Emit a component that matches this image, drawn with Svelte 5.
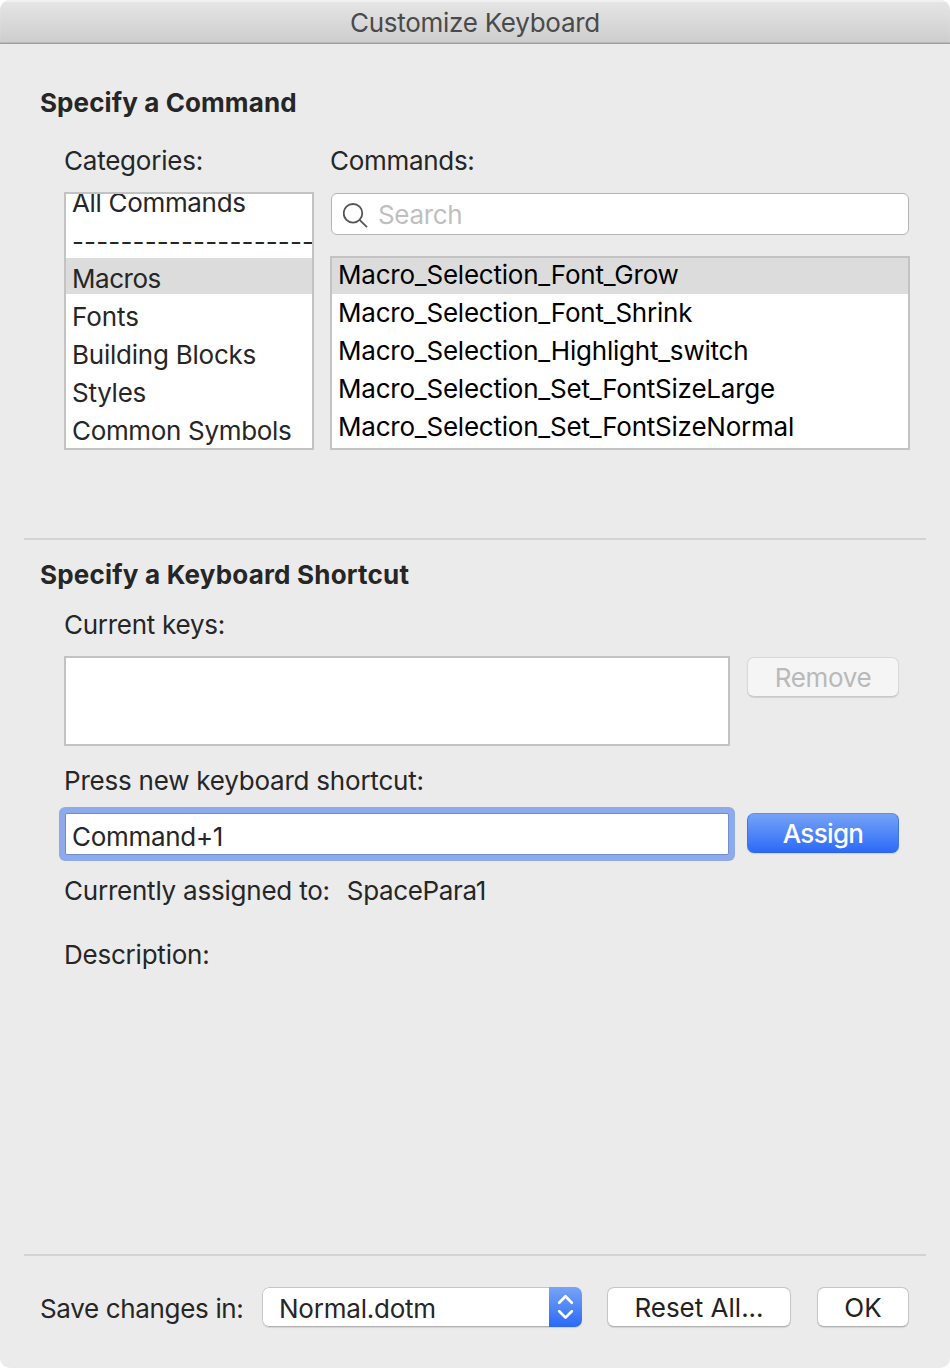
<script>
  const categories = [
    ['All Commands', -0.33],
    ['--------------------', 0.15],
    ['Macros', -0.48],
    ['Fonts', -0.05],
    ['Building Blocks', -0.23],
    ['Styles', -0.27],
    ['Common Symbols', -0.33]
  ];
  const commands = [
    'Macro_Selection_Font_Grow',
    'Macro_Selection_Font_Shrink',
    'Macro_Selection_Highlight_switch',
    'Macro_Selection_Set_FontSizeLarge',
    'Macro_Selection_Set_FontSizeNormal'
  ];
</script>

<div class="win">
  <header><span>Customize Keyboard</span></header>
  <section class="top">
    <h2>Specify a Command</h2>
    <div class="cols">
      <div class="left">
        <div class="label">Categories:</div>
        <div class="list cats">
          {#each categories as [name, tracking], i}
            <div class="item" class:sel={i === 2} class:dash={i === 1} style="letter-spacing: {tracking}px">{name}</div>
          {/each}
        </div>
      </div>
      <div class="right">
        <div class="label">Commands:</div>
        <div class="search">
          <svg width="26" height="28" viewBox="0 0 26 28"><circle cx="10" cy="13.300" r="9.300" /><path d="M16.600 19.900L24 27.200" /></svg>
          <span>Search</span>
        </div>
        <div class="list cmds">
          {#each commands as name, i}
            <div class="item" class:sel={i === 0}>{name}</div>
          {/each}
        </div>
      </div>
    </div>
  </section>
  <section class="mid">
    <h2 class="wide">Specify a Keyboard Shortcut</h2>
    <div class="label cur">Current keys:</div>
    <div class="row"><div class="keys"></div><button class="btn off">Remove</button></div>
    <div class="label press">Press new keyboard shortcut:</div>
    <div class="row r2"><div class="field">Command+1</div><button class="btn blue">Assign</button></div>
    <div class="label assigned"><span>Currently assigned to:</span><span class="name">SpacePara1</span></div>
    <div class="label desc">Description:</div>
  </section>
  <footer>
    <span class="save">Save changes in:</span>
    <div class="select">
      <span>Normal.dotm</span>
      <div class="arrows"><svg width="33" height="40" viewBox="0 0 33 40"><path d="M10.200 15.700L16.500 9.300L22.800 15.700M10.200 24.200L16.500 30.600L22.800 24.200" /></svg></div>
    </div>
    <button class="btn reset">Reset All...</button>
    <button class="btn ok">OK</button>
  </footer>
</div>

<style>
  :global(body) { background: #fff; }
  * { box-sizing: border-box; }
  .win { width: 950px; height: 1368px; background: #ebebeb; border-radius: 10px; overflow: hidden; font: 26px/38px Inter, sans-serif; color: #262626; display: flex; flex-direction: column; letter-spacing: -0.22px; white-space: nowrap; }
  header { height: 44px; flex: none; background: linear-gradient(#e6e6e6, #cdcdcd); border-bottom: 1px solid #9f9f9f; box-shadow: inset 0 -1px #b9b9b9, inset 0 2px 1px #f2f2f2; text-align: center; line-height: 45px; color: #4a4a4a; letter-spacing: -0.28px; }
  h2 { margin: 0; font-size: 26px; line-height: 38px; font-weight: 700; letter-spacing: 0.1px; }
  .wide { letter-spacing: 0.2px; }
  .top { height: 494px; margin: 0 24px; padding: 40px 16px 0; flex: none; }
  .cols { display: flex; gap: 16px; padding-left: 24px; padding-top: 20px; }
  .left { width: 250px; }
  .right { width: 580px; }
  .right .label { letter-spacing: -0.3px; }
  .list { background: #fff; border: 2px solid #c3c3c3; overflow: hidden; }
  .cats { height: 258px; margin-top: 12px; display: flex; flex-direction: column; justify-content: flex-end; }
  .item { height: 38px; flex: none; padding-left: 6px; line-height: 38px; }
  .cats .item { line-height: 42px; }
  .cats .dash { line-height: 44px; }
  .sel { background: #dcdcdc; }
  .cats .sel { background: linear-gradient(#dcdcdc 36px, #fff 36px); }
  .search { height: 42px; width: 578px; margin: 13px 1px 0; border: 1px solid #b5b5b5; border-radius: 6px; background: #fff; display: flex; align-items: center; padding-left: 11px; gap: 9px; color: #bfbfbf; letter-spacing: -0.35px; }
  .search span { padding-top: 2px; }
  .search svg { fill: none; stroke: #555; stroke-width: 1.8; }
  .cmds { height: 194px; margin-top: 21px; color: #000; }
  .cmds .item:first-child { height: 36px; line-height: 34px; }
  .mid { margin: 0 24px; height: 718px; border-top: 2px solid #d3d3d3; border-bottom: 2px solid #d3d3d3; padding: 16px 16px 0; flex: none; }
  .cur { padding: 12px 0 0 24px; letter-spacing: -0.27px; }
  .row { display: flex; padding-left: 24px; gap: 17px; margin-top: 12px; }
  .keys { width: 666px; height: 90px; background: #fff; border: 2px solid #c3c3c3; }
  .btn { font: inherit; letter-spacing: 0; color: #222; height: 40px; line-height: 36px; padding: 2px 0 0; border: 1px solid #c6c6c6; border-bottom-color: #b3b3b3; border-radius: 7px; background: #fff; box-shadow: 0 1px 1px #0000001c; }
  .off, .blue { width: 152px; letter-spacing: -0.33px; }
  .off { margin-top: 1px; color: #b9b9b9; background: #f5f5f5; border-color: #d8d8d8 #d8d8d8 #c9c9c9; }
  .blue { color: #fff; font-weight: 500; letter-spacing: -0.65px; background: linear-gradient(#78a4f6, #2a69f7) border-box; border-color: #5b8ff2 #3e76ea #2f67e8; }
  .press { padding-left: 24px; margin-top: 16px; }
  .r2 { margin-top: 13px; }
  .field { width: 664px; height: 42px; margin: 0 1px; background: #fff; border: 1px solid #6f8dd2; border-radius: 1px; box-shadow: 0 0 0 5px #8eaaea, 0 0 0 6px #8eaaea; padding-left: 6px; line-height: 46px; letter-spacing: -0.3px; outline: 6px solid #8eaaea; }
  .assigned { padding-left: 24px; margin-top: 17px; display: flex; gap: 17px; }
  .name { letter-spacing: -0.35px; }
  .desc { padding-left: 24px; margin-top: 26px; }
  footer { flex: 1; display: flex; align-items: flex-start; padding: 31px 40px 0; }
  .save { width: 222px; line-height: 44px; letter-spacing: -0.34px; }
  .select { width: 320px; height: 40px; display: flex; background: #fff; border-radius: 7px; overflow: hidden; box-shadow: 0 1px 1px #0000001c; }
  .select span { flex: 1; border: solid #c6c6c6; border-width: 1px 0 1px 1px; border-bottom-color: #b3b3b3; border-radius: 7px 0 0 7px; padding-left: 16px; line-height: 42px; }
  .arrows { width: 33px; background: linear-gradient(#78a4f6, #2a69f7); }
  .arrows svg { display: block; fill: none; stroke: #fff; stroke-width: 2.7; stroke-linecap: round; stroke-linejoin: round; }
  .field { border-radius: 2px; outline: none; }
  .reset { width: 184px; margin-left: 25px; }
  .ok { width: 92px; margin-left: 26px; }
</style>
